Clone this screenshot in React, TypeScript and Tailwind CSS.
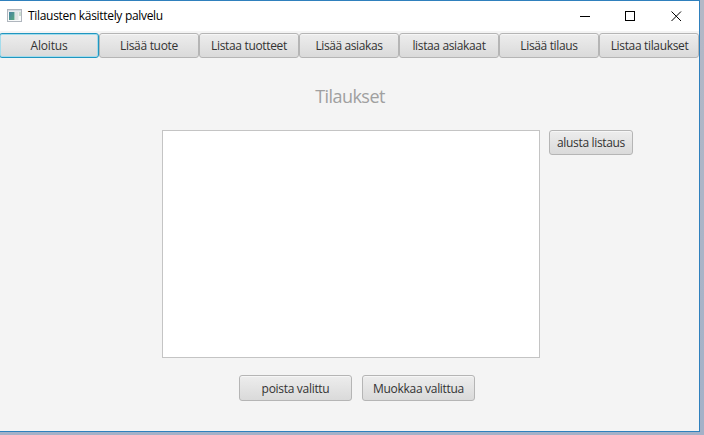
type ButtonProps = {
  label: string;
  size: string;
  text?: string;
  focused?: boolean;
};

function Button({ label, size, text = "", focused = false }: ButtonProps) {
  const skin = focused
    ? "border-[#2196c0] shadow-[inset_0_0_0_1px_#a3dcec]"
    : "border-[#b5b5b5] shadow-[inset_0_1px_0_#f6f6f6]";
  return (
    <button
      className={`flex shrink-0 items-center justify-center whitespace-nowrap rounded-[3px] border bg-linear-to-b from-[#ededed] to-[#dadada] text-[12px] leading-4 text-[#333333] ${skin} ${size}`}
    >
      <span className={text}>{label}</span>
    </button>
  );
}

function AppIcon() {
  return (
    <svg width="16" height="14" viewBox="0 0 16 14" className="shrink-0">
      <defs>
        <linearGradient id="pane" x1="0" y1="0" x2="1" y2="1">
          <stop offset="0" stopColor="#4583a0" />
          <stop offset="1" stopColor="#58a780" />
        </linearGradient>
      </defs>
      <rect x="0.5" y="0.5" width="14" height="12" fill="#f8fafa" stroke="#b0b6be" />
      <rect x="1" y="1" width="13" height="1.5" fill="#d3d9e0" />
      <rect x="2" y="3" width="5.5" height="8" fill="url(#pane)" />
      <rect x="8" y="3" width="3.5" height="8" fill="#dfe3e3" />
      <rect x="12" y="3" width="2" height="4" fill="#c9dccf" />
    </svg>
  );
}

function TitleBar() {
  return (
    <header className="flex h-[30px] shrink-0 items-center bg-white pl-[7px]">
      <AppIcon />
      <h1 className="ml-[5px] whitespace-nowrap text-[12px] leading-4 tracking-[-0.31px] text-black">
        Tilausten käsittely palvelu
      </h1>
      <svg
        width="108"
        height="12"
        viewBox="0 0 108 12"
        className="ml-auto mr-[14px] shrink-0"
        fill="none"
        stroke="#000"
      >
        <path d="M3 6.5h10" />
        <rect x="48.5" y="1.5" width="9" height="9" />
        <path d="M94.5 1.5l9.5 9.5M104 1.5l-9.5 9.5" />
      </svg>
    </header>
  );
}

const tabs = [
  { label: "Aloitus", text: "tracking-[-0.2px]" },
  { label: "Lisää tuote", text: "tracking-[-0.3px]" },
  { label: "Listaa tuotteet", text: "tracking-[-0.33px]" },
  { label: "Lisää asiakas", text: "tracking-[-0.4px]" },
  { label: "listaa asiakaat", text: "tracking-[-0.36px]" },
  { label: "Lisää tilaus", text: "tracking-[-0.35px]" },
  { label: "Listaa tilaukset", text: "pl-px tracking-[-0.34px]" },
];

export default function App() {
  return (
    <div className="h-[435px] w-[704px] overflow-hidden bg-linear-to-b from-[#b4b8c6] to-[#a4b1c8] font-['Open_Sans','Noto_Sans',sans-serif]">
      <div className="flex h-[432px] w-[700px] flex-col overflow-hidden border-t border-r border-b border-[#2f80bd] bg-[#f4f4f4]">
        <TitleBar />
        <nav className="-ml-px mt-0.5 flex shrink-0">
          {tabs.map((tab, i) => (
            <Button
              key={tab.label}
              label={tab.label}
              text={tab.text}
              focused={i === 0}
              size="h-[25px] w-[100px]"
            />
          ))}
        </nav>
        <h2 className="mt-[26px] pl-px text-center text-[18px] leading-6 tracking-[-0.55px] text-[#a0a0a0]">
          Tilaukset
        </h2>
        <div className="mt-[22px] flex gap-[9px] pl-[162px]">
          <div className="h-[228px] w-[378px] shrink-0 border border-[#c4c4c4] bg-white" />
          <Button label="alusta listaus" text="tracking-[-0.33px]" size="h-[25px] w-[84px]" />
        </div>
        <div className="mt-[17px] flex gap-[10px] pl-[239px]">
          <Button label="poista valittu" text="pt-0.5 tracking-[-0.3px]" size="h-[26px] w-[113px]" />
          <Button label="Muokkaa valittua" text="pt-0.5 tracking-[-0.3px]" size="h-[26px] w-[113px]" />
        </div>
      </div>
    </div>
  );
}
